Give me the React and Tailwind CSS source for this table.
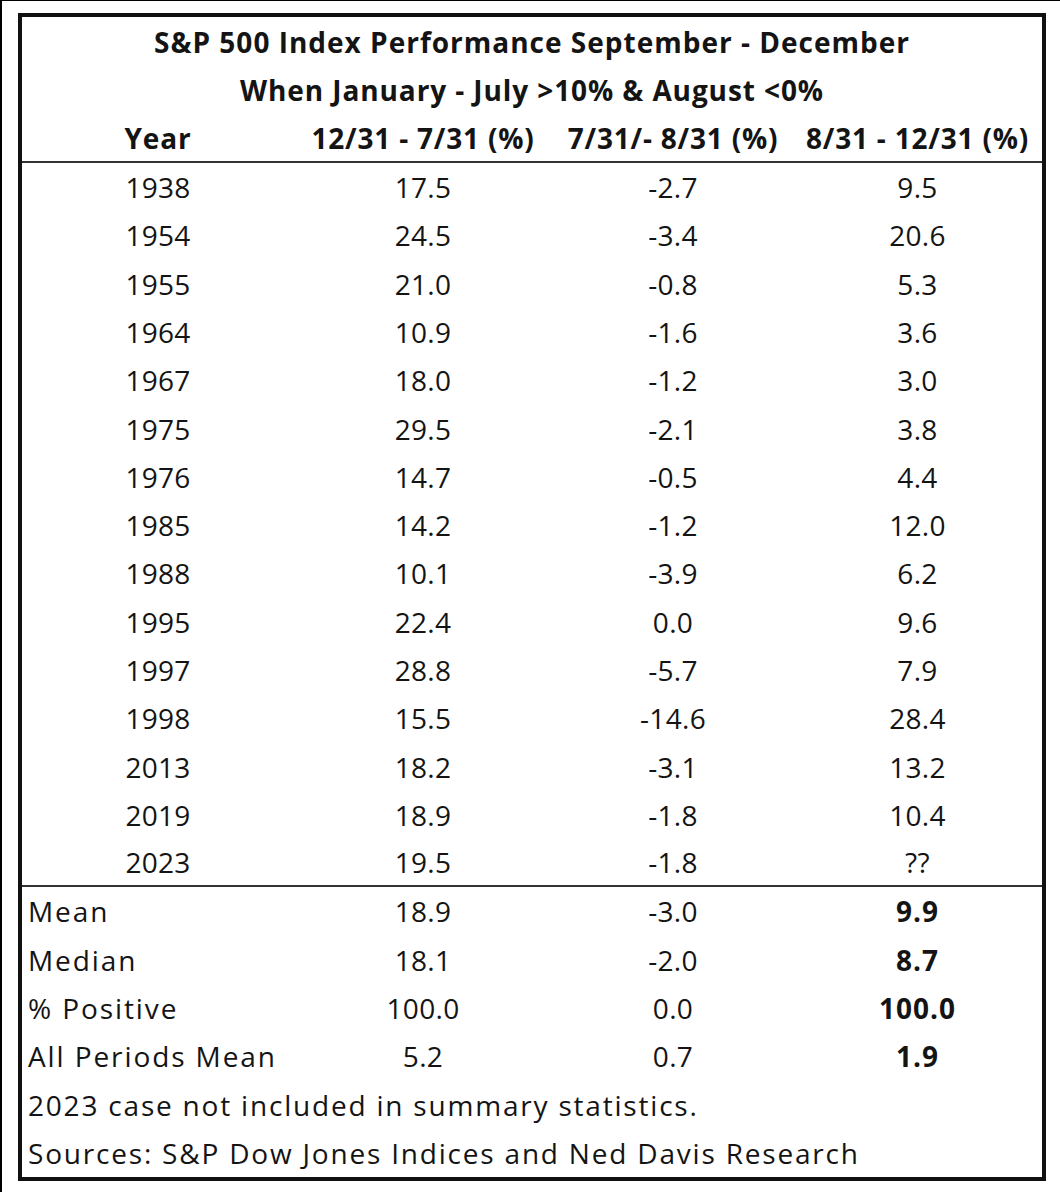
import React from 'react';

const rows = [
  ['1938', '17.5', '-2.7', '9.5'],
  ['1954', '24.5', '-3.4', '20.6'],
  ['1955', '21.0', '-0.8', '5.3'],
  ['1964', '10.9', '-1.6', '3.6'],
  ['1967', '18.0', '-1.2', '3.0'],
  ['1975', '29.5', '-2.1', '3.8'],
  ['1976', '14.7', '-0.5', '4.4'],
  ['1985', '14.2', '-1.2', '12.0'],
  ['1988', '10.1', '-3.9', '6.2'],
  ['1995', '22.4', '0.0', '9.6'],
  ['1997', '28.8', '-5.7', '7.9'],
  ['1998', '15.5', '-14.6', '28.4'],
  ['2013', '18.2', '-3.1', '13.2'],
  ['2019', '18.9', '-1.8', '10.4'],
  ['2023', '19.5', '-1.8', '??'],
];

const stats = [
  ['Mean', '18.9', '-3.0', '9.9'],
  ['Median', '18.1', '-2.0', '8.7'],
  ['% Positive', '100.0', '0.0', '100.0'],
  ['All Periods Mean', '5.2', '0.7', '1.9'],
];

const grid = 'grid grid-cols-[272px_258px_242px_247px] h-[48.3px] items-center';

const App = () => {
  return (
    <div className="w-[1060px] h-[1192px] bg-white border-l-2 border-t border-black pt-[12px] pl-[16px] text-[#141414] font-['Open_Sans','Liberation_Sans',sans-serif] text-[28px] leading-none">
      <div className="w-[1028px] h-[1168px] border-[4px] border-[#111] pt-[1px]">
        {/* Titre */}
        <div className="h-[48.3px] flex items-center justify-center font-bold tracking-[1px]">
          S&amp;P 500 Index Performance September - December
        </div>
        <div className="h-[48.3px] flex items-center justify-center font-bold tracking-[0.9px]">
          When January - July &gt;10% &amp; August &lt;0%
        </div>
        <div className={`${grid} font-bold text-center tracking-[0.8px] border-b-2 border-[#333]`}>
          <span>Year</span>
          <span>12/31 - 7/31 (%)</span>
          <span>7/31/- 8/31 (%)</span>
          <span>8/31 - 12/31 (%)</span>
        </div>

        {/* Données */}
        {rows.map((r, i) => (
          <div
            key={r[0]}
            className={`${grid} text-center tracking-[0.3px] ${i === rows.length - 1 ? 'border-b-2 border-[#333]' : ''}`}
          >
            <span>{r[0]}</span>
            <span>{r[1]}</span>
            <span>{r[2]}</span>
            <span>{r[3]}</span>
          </div>
        ))}

        {/* Statistiques */}
        {stats.map((s) => (
          <div key={s[0]} className={`${grid} text-center tracking-[0.3px]`}>
            <span className="text-left pl-[6px] tracking-[1.9px]">{s[0]}</span>
            <span>{s[1]}</span>
            <span>{s[2]}</span>
            <span className="font-bold tracking-[1px]">{s[3]}</span>
          </div>
        ))}

        <div className="h-[48.3px] flex items-center pl-[6px] tracking-[1.8px]">
          2023 case not included in summary statistics.
        </div>
        <div className="h-[48.3px] flex items-center pl-[6px] tracking-[1.8px]">
          Sources: S&amp;P Dow Jones Indices and Ned Davis Research
        </div>
      </div>
    </div>
  );
};

export default App;
